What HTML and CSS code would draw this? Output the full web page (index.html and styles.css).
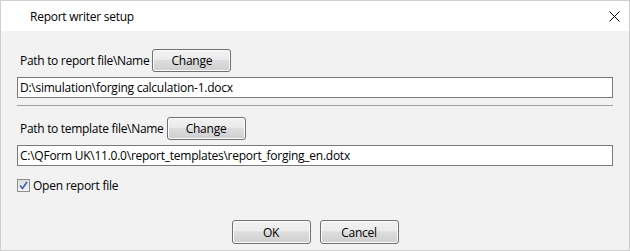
FILE: index.html
```html
<!DOCTYPE html>
<html lang="en">
<head>
    <meta charset="UTF-8">
    <title>Report writer setup</title>
    <link rel="stylesheet" href="styles.css">
</head>
<body>
    <div class="window">
        <div class="titlebar">
            <span class="title">Report writer setup</span>
            <svg class="close" width="11" height="11" viewBox="0 0 11 11">
                <path d="M0.5 0.5 L10.5 10.5 M10.5 0.5 L0.5 10.5" stroke="#000" stroke-width="1" fill="none"/>
            </svg>
        </div>

        <div class="content">
            <div class="row">
                <span class="label">Path to report file\Name</span>
                <button class="btn btn-change">Change</button>
            </div>
            <input class="field" type="text" value="D:\simulation\forging calculation-1.docx">

            <div class="separator"></div>

            <div class="row">
                <span class="label">Path to template file\Name</span>
                <button class="btn btn-change">Change</button>
            </div>
            <input class="field" type="text" value="C:\QForm UK\11.0.0\report_templates\report_forging_en.dotx">

            <label class="check">
                <span class="box">
                    <svg width="9" height="9" viewBox="0 0 9 9">
                        <path d="M1 4.5 L3.5 7.5 L8 1" stroke="#3c5db5" stroke-width="1.6" fill="none"/>
                    </svg>
                </span>
                Open report file
            </label>

            <div class="actions">
                <button class="btn btn-action">OK</button>
                <button class="btn btn-action">Cancel</button>
            </div>
        </div>
    </div>
</body>
</html>
```

FILE: styles.css
```css
* {
    margin: 0;
    padding: 0;
    box-sizing: border-box;
}

body {
    font-family: "Open Sans", "Noto Sans", sans-serif;
    font-size: 12px;
    letter-spacing: -0.25px;
    color: #000;
    background: #fff;
}

.window {
    width: 630px;
    height: 251px;
    border: 1px solid #cfcfcf;
    background: #f2f2f2;
    display: flex;
    flex-direction: column;
}

/* Barra de título */
.titlebar {
    height: 30px;
    background: #fff;
    display: flex;
    align-items: center;
    justify-content: space-between;
    padding: 0 9px 0 29px;
}

.title {
    font-size: 12px;
}

/* Conteúdo */
.content {
    padding: 18px 16px 0 16px;
    display: flex;
    flex-direction: column;
}

.row {
    display: flex;
    align-items: center;
    gap: 3px;
    height: 23px;
}

.label {
    padding-left: 3px;
    letter-spacing: -0.3px;
}

.btn {
    font-family: inherit;
    font-size: 12px;
    letter-spacing: inherit;
    color: #000;
    border: 1px solid #707070;
    border-radius: 3px;
    background: linear-gradient(#f2f2f2 0%, #ebebeb 45%, #dddddd 50%, #cfcfcf 100%);
    box-shadow: inset 0 0 0 1px #fcfcfc;
    height: 23px;
}

.btn-change {
    width: 79px;
}

.field {
    margin-top: 5px;
    height: 21px;
    width: 100%;
    border: 1px solid #7a7a7a;
    background: #fff;
    font-family: inherit;
    font-size: 12px;
    letter-spacing: inherit;
    padding: 0 2px;
    color: #000;
}

.separator {
    margin: 7px 0 11px 0;
    height: 1px;
    background: #a0a0a0;
}

/* Caixa de seleção */
.check {
    display: flex;
    align-items: center;
    gap: 3px;
    margin-top: 11px;
    padding-left: 0;
}

.box {
    width: 13px;
    height: 13px;
    border: 1px solid #8e8f8f;
    background: linear-gradient(#dcdcdc, #f6f6f6);
    display: flex;
    align-items: center;
    justify-content: center;
}

.actions {
    display: flex;
    justify-content: center;
    gap: 9px;
    margin-top: 26px;
}

.btn-action {
    width: 79px;
    height: 24px;
}
```
